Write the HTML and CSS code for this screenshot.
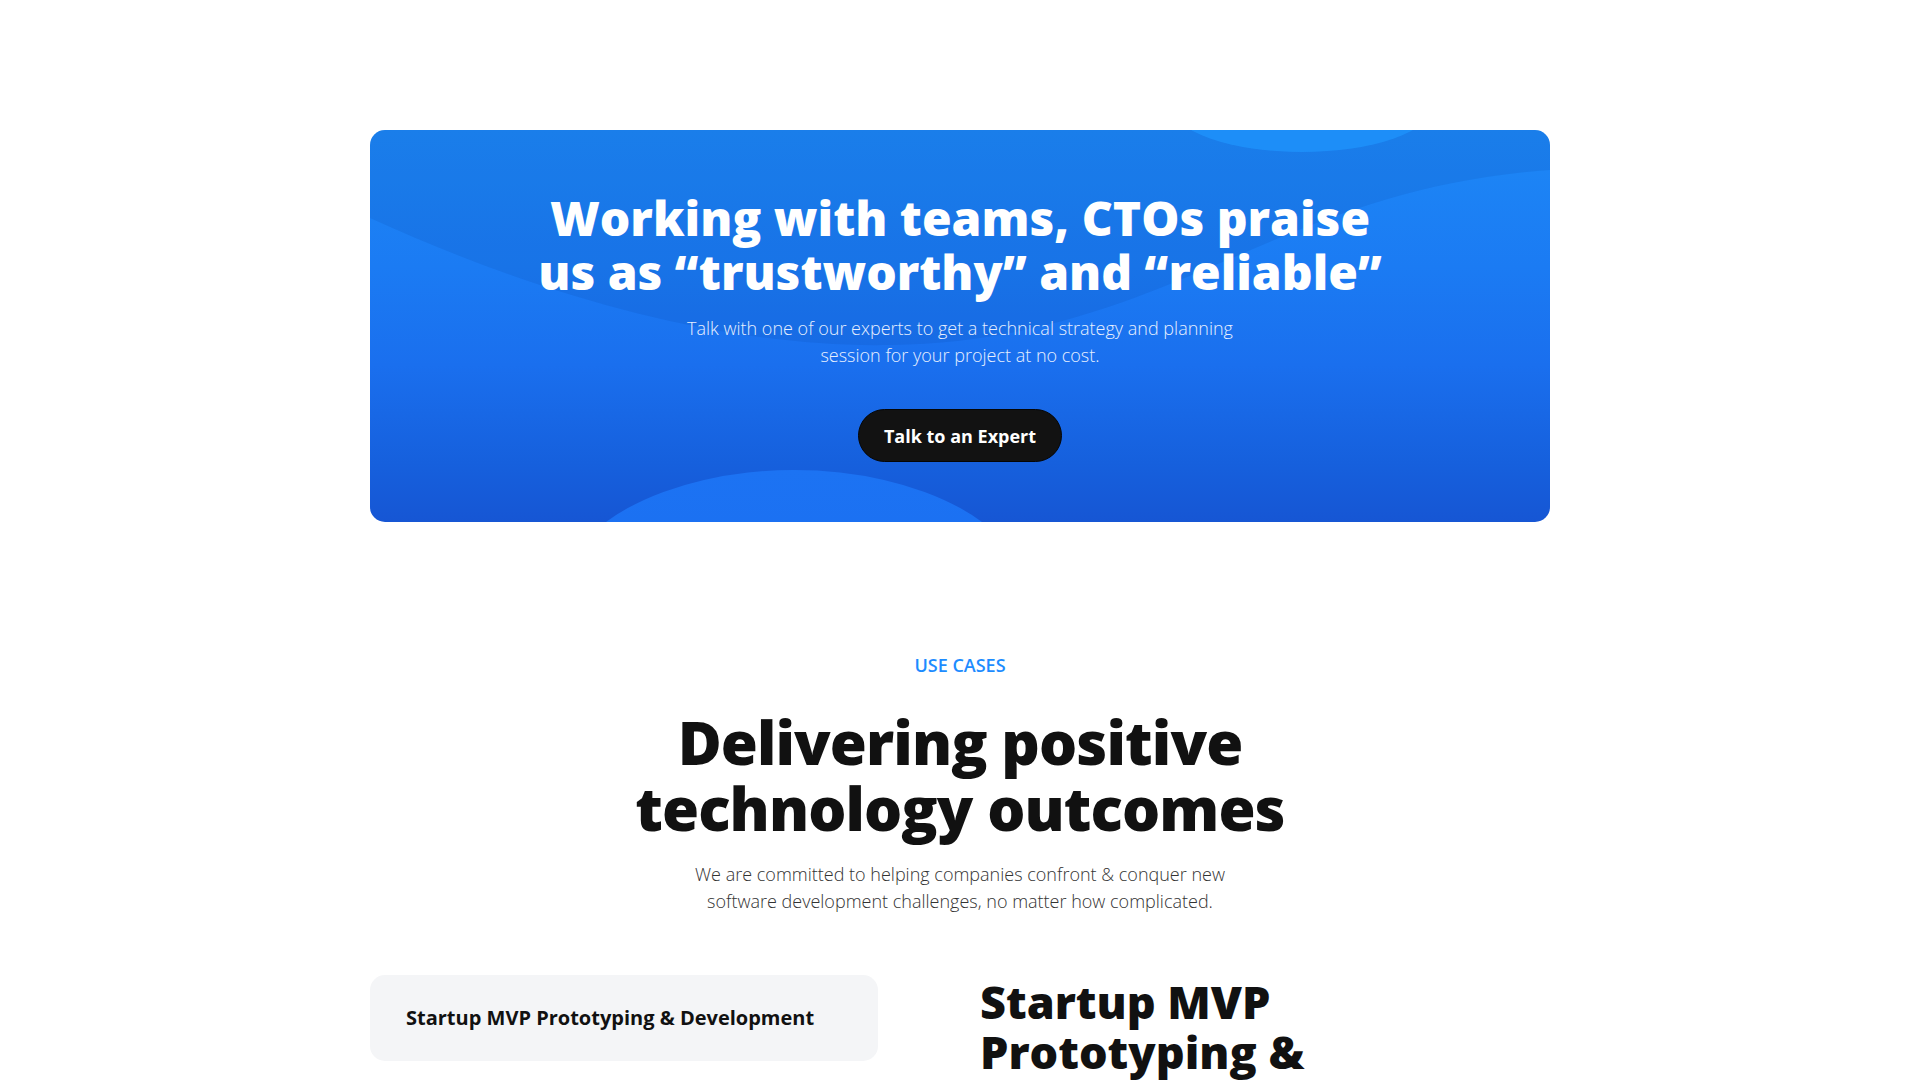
FILE: index.html
```html
<!DOCTYPE html>
<html lang="en">
<head>
<meta charset="utf-8">
<title>Talk to an Expert</title>
<link rel="stylesheet" href="styles.css">
</head>
<body>
<main class="page">
  <section class="cta">
    <svg class="cta-waves" viewBox="0 0 1180 392" preserveAspectRatio="none" aria-hidden="true">
      <defs>
        <linearGradient id="bumpGrad" x1="0" y1="0" x2="0" y2="1">
          <stop offset="0" stop-color="#1c73f3"/>
          <stop offset="1" stop-color="#1968ee"/>
        </linearGradient>
      </defs>
      <path d="M0,0 L1180,0 L1180,40 C900,60 800,210 520,215 C360,218 180,170 0,88 Z" fill="#0a3a9a" fill-opacity="0.13"/>
      <ellipse cx="932" cy="-24" rx="130" ry="46" fill="#1e90f9" fill-opacity="0.9"/>
      <ellipse cx="424" cy="470" rx="235" ry="130" fill="url(#bumpGrad)"/>
    </svg>
    <div class="cta-inner">
      <h2 class="cta-title">Working with teams, CTOs praise us as “trustworthy” and “reliable”</h2>
      <p class="cta-text">Talk with one of our experts to get a technical strategy and planning session for your project at no cost.</p>
      <a class="cta-button" href="#">Talk to an Expert</a>
    </div>
  </section>

  <section class="usecases">
    <div class="eyebrow">USE CASES</div>
    <h2 class="section-title">Delivering positive technology outcomes</h2>
    <p class="section-text">We are committed to helping companies confront &amp; conquer new software development challenges, no matter how complicated.</p>

    <div class="cases">
      <div class="case-tabs">
        <div class="case-tab">Startup MVP Prototyping &amp; Development</div>
      </div>
      <div class="case-detail">
        <h3 class="case-title">Startup MVP Prototyping &amp; Development</h3>
      </div>
    </div>
  </section>
</main>
</body>
</html>
```

FILE: styles.css
```css
* { box-sizing: border-box; }

html, body {
  margin: 0;
  padding: 0;
  background: #ffffff;
  font-family: "Open Sans", "Noto Sans", "Liberation Sans", sans-serif;
  color: #111111;
}

.page {
  width: 1180px;
  margin: 0 auto;
  padding-top: 130px;
}

/* CTA banner */
.cta {
  position: relative;
  overflow: hidden;
  border-radius: 15px;
  height: 392px;
  background: linear-gradient(180deg, #1d88f6 0%, #1b7bf3 35%, #1a6fee 60%, #1660dd 85%, #1656d4 100%);
}

.cta-waves {
  position: absolute;
  inset: 0;
  width: 100%;
  height: 100%;
}

.cta-inner {
  position: relative;
  display: flex;
  flex-direction: column;
  align-items: center;
  padding: 61px 40px 60px;
  text-align: center;
}

.cta-title {
  margin: 0;
  max-width: 865px;
  font-size: 48px;
  line-height: 54px;
  font-weight: 800;
  color: #ffffff;
}

.cta-text {
  margin: 16px 0 0;
  max-width: 560px;
  font-size: 18px;
  line-height: 27px;
  font-weight: 300;
  color: #e6efff;
}

.cta-button {
  margin-top: 40px;
  display: inline-flex;
  align-items: center;
  justify-content: center;
  height: 53px;
  padding: 0 25px;
  border-radius: 27px;
  background: #121212;
  border: 1px solid #050505;
  color: #ffffff;
  font-size: 18px;
  font-weight: 700;
  text-decoration: none;
}

/* Use cases */
.usecases {
  padding-top: 130px;
  display: flex;
  flex-direction: column;
  align-items: center;
  text-align: center;
}

.eyebrow {
  font-size: 18px;
  line-height: 27px;
  font-weight: 600;
  color: #1d8cff;
}

.section-title {
  margin: 30px 0 0;
  max-width: 760px;
  font-size: 60px;
  line-height: 66px;
  font-weight: 800;
  color: #111111;
  letter-spacing: -0.9px;
}

.section-text {
  margin: 20px 0 0;
  max-width: 560px;
  font-size: 18px;
  line-height: 27px;
  font-weight: 300;
  color: #333333;
}

.cases {
  width: 100%;
  margin-top: 60px;
  display: grid;
  grid-template-columns: 508px 1fr;
  column-gap: 102px;
  text-align: left;
}

.case-tab {
  background: #f4f5f7;
  border-radius: 15px;
  padding: 28px 36px;
  font-size: 20px;
  line-height: 30px;
  font-weight: 700;
  color: #111111;
}

.case-title {
  margin: 2px 0 0;
  font-size: 45px;
  line-height: 50px;
  font-weight: 800;
  color: #111111;
}
```
